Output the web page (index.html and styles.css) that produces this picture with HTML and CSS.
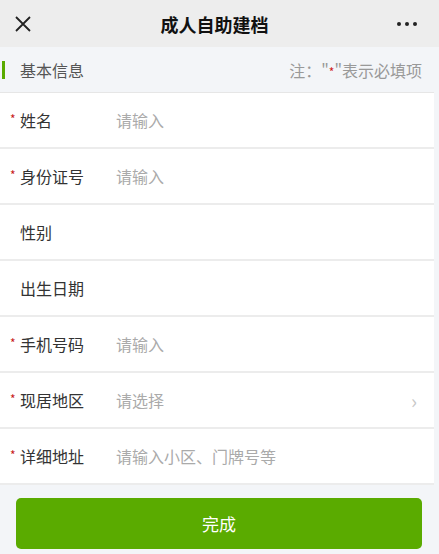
FILE: index.html
```html
<!DOCTYPE html>
<html lang="zh-CN">
<head>
    <meta charset="UTF-8" />
    <meta name="viewport" content="width=device-width, initial-scale=1.0" />
    <title>成人自助建档</title>
    <link rel="stylesheet" href="styles.css">
</head>
<body>
    <div id="app">
        <div class="topbar">
            <svg class="close" width="18" height="18" viewBox="0 0 18 18"><path d="M2 2 L16 16 M16 2 L2 16" stroke="#222" stroke-width="1.8" fill="none"/></svg>
            <h2>成人自助建档</h2>
            <div class="more"><i></i><i></i><i></i></div>
        </div>
        <div class="section">
            <span class="section-title">基本信息</span>
            <span class="note">注：&quot;<b>*</b>&quot;表示必填项</span>
        </div>
        <div class="form">
            <div class="row"><span class="label req">姓名</span><span class="value">请输入</span></div>
            <div class="row"><span class="label req">身份证号</span><span class="value">请输入</span></div>
            <div class="row"><span class="label">性别</span></div>
            <div class="row"><span class="label">出生日期</span></div>
            <div class="row"><span class="label req">手机号码</span><span class="value">请输入</span></div>
            <div class="row"><span class="label req">现居地区</span><span class="value">请选择</span><span class="arrow">&rsaquo;</span></div>
            <div class="row"><span class="label req">详细地址</span><span class="value">请输入小区、门牌号等</span></div>
        </div>
        <div class="actions">
            <button id="done">完成</button>
        </div>
    </div>
</body>
</html>
```
FILE: styles.css
```css
* { box-sizing: border-box; }
body {
    font-family: "Noto Sans CJK SC", "Noto Sans", sans-serif;
    margin: 0;
    padding: 0;
    background-color: #f3f5f8;
    width: 439px;
    height: 554px;
    overflow: hidden;
}
#app {
    display: flex;
    flex-direction: column;
}
.topbar {
    height: 47px;
    background-color: #ededed;
    display: flex;
    align-items: center;
    padding: 0 22px 0 14px;
}
.topbar h2 {
    flex: 1;
    margin: 0;
    text-align: center;
    font-size: 18px;
    font-weight: 700;
    color: #111;
}
.more {
    display: flex;
    gap: 4px;
}
.more i {
    width: 4px;
    height: 4px;
    border-radius: 50%;
    background: #222;
}
.section {
    height: 46px;
    display: flex;
    align-items: center;
    justify-content: space-between;
    padding: 0 12px 0 2px;
    margin-right: 5px;
    border-bottom: 1px solid #e6e6e6;
}
.section-title {
    border-left: 3px solid #5aab00;
    padding-left: 15px;
    font-size: 16px;
    line-height: 18px;
    color: #555;
}
.note {
    font-size: 16px;
    color: #999;
}
.note b {
    color: #d01c1c;
    font-weight: 400;
    font-size: 12px;
}
.form {
    margin-right: 5px;
    background: #fff;
}
.row {
    height: 56px;
    display: flex;
    align-items: center;
    padding: 0 17px 0 20px;
    border-bottom: 2px solid #ececec;
}
.label {
    position: relative;
    width: 96px;
    font-size: 16px;
    color: #333;
}
.label.req::before {
    content: "*";
    position: absolute;
    left: -10px;
    top: 2px;
    color: #c81a1a;
    font-size: 12px;
}
.value {
    flex: 1;
    font-size: 16px;
    color: #aaa;
}
.arrow {
    color: #c8c8c8;
    font-size: 20px;
}
.actions {
    padding: 13px 17px 0 16px;
}
#done {
    width: 100%;
    height: 51px;
    border: none;
    border-radius: 5px;
    background-color: #5aab00;
    color: #fff;
    font-family: inherit;
    font-size: 17px;
}
```
